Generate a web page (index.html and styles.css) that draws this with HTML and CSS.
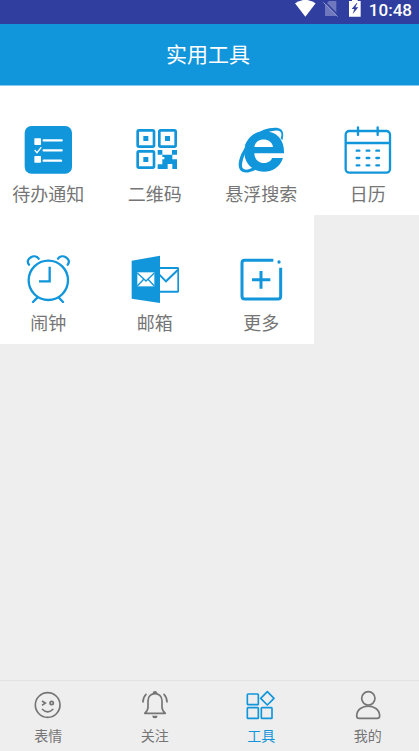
FILE: index.html
```html
<!DOCTYPE html>
<html lang="zh-CN">
<head>
<meta charset="utf-8">
<meta name="viewport" content="width=device-width, initial-scale=1">
<title>实用工具</title>
<link rel="stylesheet" href="styles.css">
</head>
<body>
<div class="status">
  <svg class="status-icons" viewBox="42 0 204 72" aria-hidden="true">
    <path fill="#fff" d="M45 10Q76-11 107 10L76 50Z"/>
    <path fill="#7078bd" d="M147 3h22v45H135V15z"/>
    <path stroke="#303f9f" stroke-width="4" d="M133 4l43 43"/>
    <path stroke="#8f96cc" stroke-width="3" d="M130 7l43 43"/>
    <path fill="#fff" d="M207 3h9v-5h17v5h9v47h-35z"/>
    <path fill="#303f9f" d="M230 9l-15 18h8l-5 15 17-20h-9l6-13z"/>
  </svg>
  <span class="time">10:48</span>
</div>
<header class="header"><h1>实用工具</h1></header>
<main class="tools">
  <div class="row">
    <a class="tool" href="#">
      <svg viewBox="73 48 144 144" aria-hidden="true">
        <rect class="fill" x="75" y="48" width="142" height="143" rx="20"/>
        <g fill="#fff"><rect x="104" y="85" width="20" height="20" rx="2"/><rect x="104" y="138" width="20" height="20" rx="2"/></g>
        <g fill="none" stroke="#fff" stroke-linecap="round"><path stroke-width="7" d="M132 91h54M132 121h54M132 152h52"/><path stroke-width="4" d="M106 121l6 7 12-15"/></g>
      </svg>
      <span>待办通知</span>
    </a>
    <a class="tool" href="#">
      <svg viewBox="77 48 144 144" aria-hidden="true">
        <g class="line" stroke-width="8"><rect x="97" y="61" width="49" height="49" rx="4"/><rect x="162" y="61" width="49" height="49" rx="4"/><rect x="97" y="124" width="49" height="49" rx="4"/></g>
        <path class="fill" d="M114 78h15v15h-15zM179 78h15v15h-15zM114 141h15v15h-15zM157 120h14v14h29v-14h15v14h-14v14h14v29h-14v-15h-14v15h-30v-14h14v-15h6v-7h-6v-7h-14z"/>
      </svg>
      <span>二维码</span>
    </a>
    <a class="tool" href="#">
      <svg viewBox="82 48 144 144" aria-hidden="true">
        <path class="fill" fill-rule="evenodd" d="M223 130H134C136 168 181 165 187 144H220C211 173 186 185 163 185C128 185 105 159 104 129C103 90 131 64 164 64C203 64 225 92 223 130ZM134 111H190C187 82 138 80 134 111Z"/>
        <path class="fill" d="M104 107C121 77 157 54 196 53C218 53 225 66 218 91L213 85C220 66 211 60 195 62C178 64 157 70 139 84C124 94 114 101 104 107Z"/>
        <path class="fill" d="M132 86C111 99 88 135 87 163C87 191 110 193 138 179L131 172C110 184 95 181 97 163C99 143 112 112 132 86Z"/>
      </svg>
      <span>悬浮搜索</span>
    </a>
    <a class="tool" href="#">
      <svg viewBox="89 48 144 144" aria-hidden="true">
        <g class="line" stroke-width="7"><rect x="94" y="63" width="133" height="125" rx="11"/><path d="M94 99h133"/></g>
        <g class="line" stroke-width="7" stroke-linecap="round"><path d="M131 52v23M190 52v23"/><path d="M127 122h8M157 122h8M186 122h8M127 144h8M157 144h8M186 144h8M127 166h8M157 166h8M186 166h8"/></g>
      </svg>
      <span>日历</span>
    </a>
  </div>
  <div class="row row-three">
    <a class="tool" href="#">
      <svg viewBox="73 45 144 144" aria-hidden="true">
        <g class="line" stroke-width="7"><circle cx="146" cy="121" r="59"/><path d="M150 80v44h-32"/><path stroke-linecap="round" d="M88 74C74 57 105 39 117 56M204 74C218 57 187 39 175 56M113 173l-13 13M178 173l12 13"/></g>
      </svg>
      <span>闹钟</span>
    </a>
    <a class="tool" href="#">
      <svg viewBox="77 45 144 144" aria-hidden="true">
        <path class="fill" d="M79 62L164 47V189L79 176Z"/>
        <g class="line" stroke-width="6"><rect x="155" y="84" width="64" height="71" rx="3"/><path d="M162 104l20 20 36-35"/></g>
        <rect x="96" y="97" width="51" height="42" fill="#fff"/>
        <path class="line" stroke-width="4" d="M96 99l26 24 25-24M96 138l19-20M147 138l-19-20"/>
      </svg>
      <span>邮箱</span>
    </a>
    <a class="tool" href="#">
      <svg viewBox="82 45 144 144" aria-hidden="true">
        <path class="line" stroke-width="9" d="M191 61H105Q97 61 97 69V169Q97 177 105 177H205Q213 177 213 169V83M154 93v53M127 119h55"/>
        <circle class="fill" cx="208" cy="66" r="5"/>
      </svg>
      <span>更多</span>
    </a>
  </div>
</main>
<nav class="tabs">
  <a class="tab" href="#">
    <svg viewBox="100 45 90 90" aria-hidden="true"><g class="line" stroke-width="5"><circle cx="144" cy="90" r="37"/><path d="M127 78l10 6-10 7M127 102q17 17 34 0"/><circle cx="156" cy="84" r="5"/></g></svg>
    <span>表情</span>
  </a>
  <a class="tab" href="#">
    <svg viewBox="419 45 90 90" aria-hidden="true"><g class="line" stroke-width="5"><path stroke-linejoin="round" d="M433 115Q443 107 443 97V77C443 49 485 49 485 77V97Q485 107 495 115Z"/><path stroke-linecap="round" d="M437 58Q428 67 428 81M491 58Q500 67 500 81"/></g><path class="fill" d="M457 55q0-7 7-7t7 7zM455 122h17q-1 8-8 8t-9-8z"/></svg>
    <span>关注</span>
  </a>
  <a class="tab active" href="#" aria-current="page">
    <svg viewBox="109 45 90 90" aria-hidden="true"><g class="line" stroke-width="5"><rect x="113" y="57" width="33" height="32" rx="2"/><rect x="113" y="98" width="33" height="32" rx="2"/><rect x="155" y="98" width="32" height="32" rx="2"/><path stroke-linejoin="round" d="M173 50l20 20-20 20-20-20z"/></g></svg>
    <span>工具</span>
  </a>
  <a class="tab" href="#">
    <svg viewBox="428 45 90 90" aria-hidden="true"><g class="line" stroke-width="5"><circle cx="474" cy="70" r="20"/><path d="M447 130Q439 130 439 122C441 84 506 84 508 122Q508 130 500 130Z"/></g></svg>
    <span>我的</span>
  </a>
</nav>
</body>
</html>
```
FILE: styles.css
```css
* {
  box-sizing: border-box;
}

body {
  margin: 0;
  min-height: 100vh;
  display: flex;
  flex-direction: column;
  background: #eee;
  color: #757575;
  font-family: Roboto, "Noto Sans CJK SC", sans-serif;
}

a {
  color: inherit;
  text-decoration: none;
}

svg {
  display: block;
}

.status {
  height: 24px;
  padding-right: 7px;
  display: flex;
  justify-content: flex-end;
  gap: 7px;
  background: #303f9f;
  color: #fff;
}

.status-icons {
  width: 68px;
  height: 24px;
}

.time {
  font-size: 17px;
  font-weight: 500;
  line-height: 20px;
}

.header {
  padding: 2px 3px 0 0;
  background: #1296db;
  border-bottom: 1px solid #88caed;
  color: #fff;
  text-align: center;
}

.header h1 {
  margin: 0;
  font-size: 21px;
  font-weight: 400;
  line-height: 59px;
}

.tools {
  flex: 1;
}

.row,
.tabs {
  display: grid;
  grid-template-columns: repeat(4, 1fr);
  column-gap: 10px;
  padding-right: 3px;
}

.row {
  background: #fff;
}

.row-three {
  background: linear-gradient(to right, #fff 75%, #eee 75%);
}

.tool,
.tab {
  display: flex;
  flex-direction: column;
  align-items: center;
  white-space: nowrap;
}

.tool {
  gap: 9px;
  padding: 40px 0 8px;
  font-size: 18px;
  line-height: 24px;
}

.tool svg {
  width: 48px;
  height: 48px;
  color: #1296db;
}

.line {
  fill: none;
  stroke: currentColor;
}

.fill {
  fill: currentColor;
}

.tabs {
  border-top: 1px solid #e2e2e2;
}

.tab {
  gap: 6px;
  padding: 9px 0 5px;
  font-size: 14px;
  line-height: 20px;
}

.tab svg {
  width: 30px;
  height: 30px;
}

.active {
  color: #1296db;
}
```
